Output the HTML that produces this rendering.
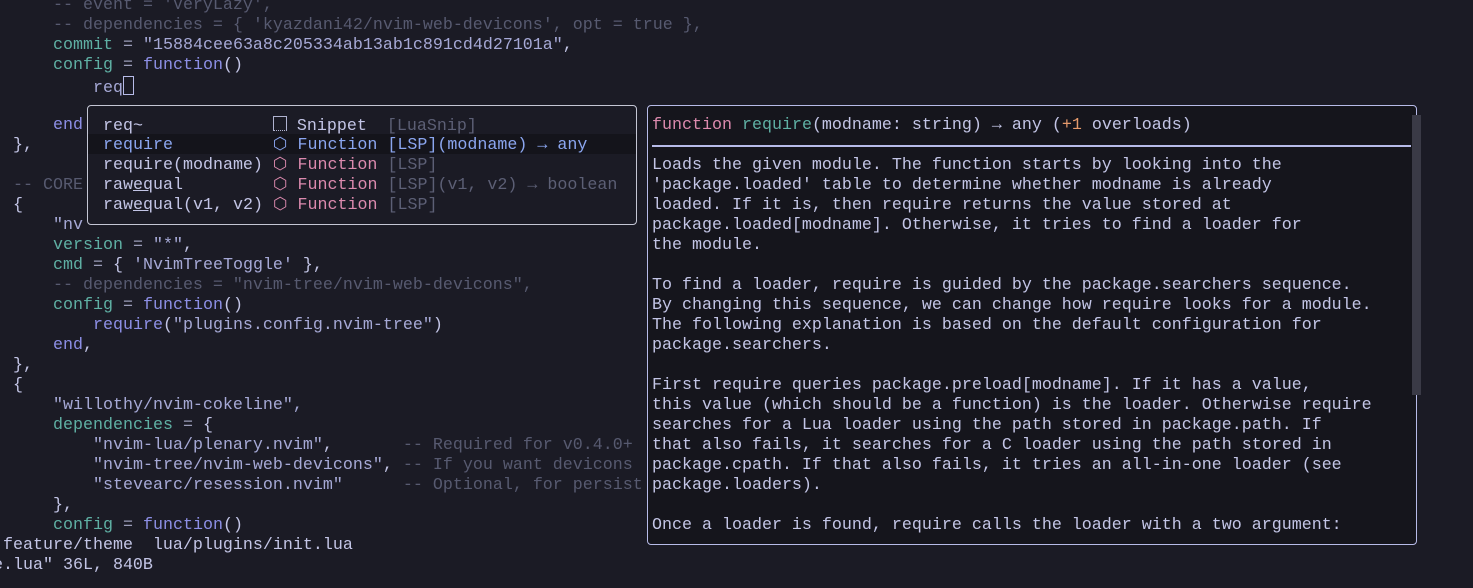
<!DOCTYPE html>
<html><head><meta charset="utf-8"><style>
body{margin:0;width:1473px;height:588px;overflow:hidden;background:#1b1b25;font-family:"Liberation Mono",monospace;font-size:16.67px;color:#c3c5e6}
.l{position:absolute;height:20px;line-height:20px;white-space:pre;margin-top:2px}
.c{color:#575a70}.k{color:#5fb0a4}.s{color:#a6a9d6}.f{color:#8d8fe6}.p{color:#9a9cb8}
#cmp{position:absolute;left:87px;top:105px;width:548px;height:118px;border:1.5px solid #c4c6d4;border-radius:4px;background:#1b1b25}
#doc{position:absolute;left:647px;top:105px;width:768px;height:438px;border:1.5px solid #b7bbe8;border-radius:4px;background:#15151c}
.sel{color:#8ba6f0}.pk{color:#dc8aae}.g{color:#5c5f75}
</style></head><body>
<div class="l c" style="left:53px;top:-6px">-- event = 'VeryLazy',</div>
<div class="l c" style="left:53px;top:14px">-- dependencies = { 'kyazdani42/nvim-web-devicons', opt = true },</div>
<div class="l" style="left:53px;top:34px"><span class="k">commit</span> <span class="p">=</span> <span class="s">"15884cee63a8c205334ab13ab1c891cd4d27101a"</span>,</div>
<div class="l" style="left:53px;top:54px"><span class="k">config</span> <span class="p">=</span> <span class="f">function</span>()</div>
<div class="l" style="left:93px;top:74px"><span class="s">req</span><span style="display:inline-block;width:9px;height:17px;border:1px solid #b7bbe8;vertical-align:-3px"></span></div>
<div class="l f" style="left:53px;top:114px">end</div>
<div class="l" style="left:13px;top:134px">},</div>
<div class="l c" style="left:13px;top:174px">-- CORE</div>
<div class="l" style="left:13px;top:194px">{</div>
<div class="l s" style="left:53px;top:214px">"nv</div>
<div class="l" style="left:53px;top:234px"><span class="k">version</span> <span class="p">=</span> <span class="s">"*"</span>,</div>
<div class="l" style="left:53px;top:254px"><span class="k">cmd</span> <span class="p">=</span> { <span class="s">'NvimTreeToggle'</span> },</div>
<div class="l c" style="left:53px;top:274px">-- dependencies = "nvim-tree/nvim-web-devicons",</div>
<div class="l" style="left:53px;top:294px"><span class="k">config</span> <span class="p">=</span> <span class="f">function</span>()</div>
<div class="l" style="left:93px;top:314px"><span class="f">require</span>(<span class="s">"plugins.config.nvim-tree"</span>)</div>
<div class="l" style="left:53px;top:334px"><span class="f">end</span>,</div>
<div class="l" style="left:13px;top:354px">},</div>
<div class="l" style="left:13px;top:374px">{</div>
<div class="l s" style="left:53px;top:394px">"willothy/nvim-cokeline",</div>
<div class="l" style="left:53px;top:414px"><span class="k">dependencies</span> <span class="p">=</span> {</div>
<div class="l" style="left:93px;top:434px"><span class="s">"nvim-lua/plenary.nvim"</span>,       <span class="c">-- Required for v0.4.0+</span></div>
<div class="l" style="left:93px;top:454px"><span class="s">"nvim-tree/nvim-web-devicons"</span>, <span class="c">-- If you want devicons</span></div>
<div class="l" style="left:93px;top:474px"><span class="s">"stevearc/resession.nvim"</span>      <span class="c">-- Optional, for persist</span></div>
<div class="l" style="left:53px;top:494px">},</div>
<div class="l" style="left:53px;top:514px"><span class="k">config</span> <span class="p">=</span> <span class="f">function</span>()</div>
<div class="l" style="left:3px;top:534px">feature/theme  lua/plugins/init.lua</div>
<div class="l" style="left:-7px;top:554px">e.lua" 36L, 840B</div>

<div id="cmp">
<div style="position:absolute;left:0;top:28px;width:548px;height:20px;background:#14141b"></div>
<div class="l" style="left:15px;top:8px">req~             <span style="display:inline-block;width:12px;height:13px;border:1px solid #b0b3d0;border-bottom-style:dotted;vertical-align:-1px"></span> Snippet  <span class="g">[LuaSnip]</span></div>
<div class="l sel" style="left:15px;top:28px">require          ⬡ Function [LSP](modname) → any</div>
<div class="l" style="left:15px;top:48px">require(modname) <span class="pk">⬡ Function</span> <span class="g">[LSP]</span></div>
<div class="l" style="left:15px;top:68px">raw<u>eq</u>ual         <span class="pk">⬡ Function</span> <span class="g">[LSP](v1, v2) → boolean</span></div>
<div class="l" style="left:15px;top:88px">raw<u>eq</u>ual(v1, v2) <span class="pk">⬡ Function</span> <span class="g">[LSP]</span></div>
</div>

<div id="doc">
<div style="position:absolute;left:764px;top:9px;width:9px;height:280px;background:#3a3a46"></div>
<div style="position:absolute;left:4px;top:39px;width:759px;height:2px;background:#b7bbe8"></div>
<div class="l" style="left:4px;top:8px"><span style="color:#dc8aae">function</span> <span class="k">require</span>(modname: string) → any (<span style="color:#e59a6c">+1</span> overloads)</div>
<div class="l" style="left:4px;top:48px;line-height:20px">Loads the given module. The function starts by looking into the
'package.loaded' table to determine whether modname is already
loaded. If it is, then require returns the value stored at
package.loaded[modname]. Otherwise, it tries to find a loader for
the module.

To find a loader, require is guided by the package.searchers sequence.
By changing this sequence, we can change how require looks for a module.
The following explanation is based on the default configuration for
package.searchers.

First require queries package.preload[modname]. If it has a value,
this value (which should be a function) is the loader. Otherwise require
searches for a Lua loader using the path stored in package.path. If
that also fails, it searches for a C loader using the path stored in
package.cpath. If that also fails, it tries an all-in-one loader (see
package.loaders).

Once a loader is found, require calls the loader with a two argument:</div>
</div>
</body></html>
